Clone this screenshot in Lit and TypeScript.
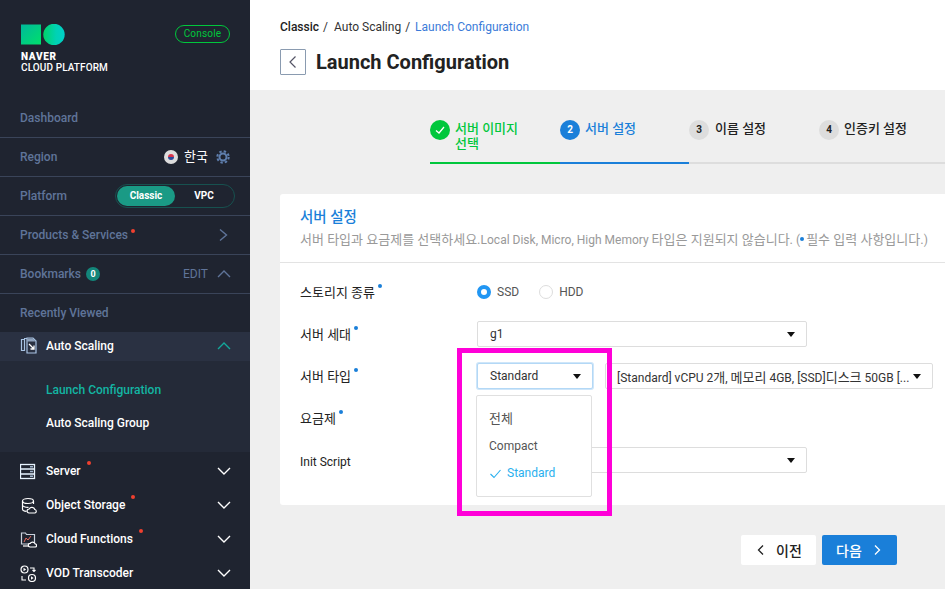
import { LitElement, css, html, svg } from "lit";
import { customElement } from "lit/decorators.js";

const chevron = (d: string) => html`<svg class="chev" width="14" height="14" viewBox="0 0 14 14"><path d=${d} fill="none" stroke="currentColor" stroke-width="1.4"/></svg>`;
const UP = "M2 10 8 4 14 10";
const DOWN = "M2 4 8 10 14 4";
const RIGHT = "M4 1.500 10.500 7 4 12.500";

const icons: Record<string, unknown> = {
  scaling: svg`<path d="M1.5 2.5h3v11h-3zM4 1.5h3v12M7 1h6l3 3v12H7z" fill="none" stroke="#a9c4e4" stroke-width="1.2"/><path d="M7 1.5h6l3 3H7z" fill="#8fa3bd"/><path d="M9 7l5 5M14 8.500V12h-3.500" fill="none" stroke="#fff" stroke-width="1.300"/>`,
  server: svg`<rect x="0.500" y="1.500" width="14" height="14" fill="none" stroke="#e8f4ff" stroke-width="1.300"/><path d="M0.500 6h14M0.500 11h14" stroke="#e8f4ff" stroke-width="1.300"/><path d="M10 3.700h3M10 8.500h3M10 13.300h3" stroke="#9fb4cc" stroke-width="1.500"/>`,
  storage: svg`<ellipse cx="8" cy="4" rx="5.500" ry="2.500" fill="none" stroke="#fff" stroke-width="1.200"/><path d="M2.500 4v8c0 1.300 2 2.200 4 2.400M13.500 4v3M2.500 8c0 1.500 3 2.500 6 2.300" fill="none" stroke="#fff" stroke-width="1.200"/><path d="M9 16a2 2 0 0 1 .2-4 3 3 0 0 1 5.600.5 1.800 1.800 0 0 1 .2 3.500z" fill="#1f2430" stroke="#fff" stroke-width="1.200"/>`,
  functions: svg`<path d="M1.500 2h4l1 1.500h8V13h-13z" fill="none" stroke="#c9d2dd" stroke-width="1.200"/><path d="M4 11l2-4 2 2 3-4" fill="none" stroke="#e36a5f" stroke-width="1"/><path d="M3 15h7" stroke="#fff" stroke-width="1.200"/><path d="M10 16a1.800 1.800 0 0 1 .2-3.600 2.800 2.800 0 0 1 5 .5 1.600 1.600 0 0 1 .3 3.100z" fill="#1f2430" stroke="#fff" stroke-width="1.200"/>`,
  vod: svg`<circle cx="4.500" cy="4.500" r="3.500" fill="none" stroke="#fff" stroke-width="1.200"/><path d="M3.500 2.800v3.400l2.600-1.700z" fill="#fff"/><circle cx="12" cy="13" r="3.500" fill="none" stroke="#fff" stroke-width="1.200"/><path d="M11 11.300v3.400l2.600-1.700z" fill="#fff"/><path d="M10 3h4v3M12.500 5l1.500 1.500L15.500 5M2 11v4h4" fill="none" stroke="#fff" stroke-width="1.100"/>`,
};

@customElement("app-root")
export class AppRoot extends LitElement {
  static styles = css`
    :host {
      display: flex;
      width: 945px;
      height: 589px;
      overflow: hidden;
      font-family: Roboto, "Noto Sans CJK KR", sans-serif;
      font-size: 12px;
      background: #efefef;
      color: #222;
    }
    * { box-sizing: border-box; }
    svg { display: block; flex: none; }
    .chev { overflow: visible; }
    .ko { font-size: 13px; }

    .side { width: 250px; flex: none; background: #1f2430; color: #5f7499; font-weight: 500; }
    .brand { height: 99px; padding: 24px 20px 0 21px; display: flex; justify-content: space-between; }
    .logo-text { margin-top: 6px; color: #fff; font-size: 10px; line-height: 11px; letter-spacing: 0.1px; }
    .logo-text b { display: block; font-weight: 900; letter-spacing: 0.7px; }
    .console { height: 18px; width: 55px; margin-top: 1px; border: 1px solid #00c73c; border-radius: 9px; color: #00c73c; font-size: 10px; font-weight: 400; line-height: 16px; text-align: center; letter-spacing: 0.2px; }

    .row { height: 39px; padding: 0 20px; display: flex; align-items: center; border-bottom: 1px solid #3a4459; }
    .row.plain { border-bottom: 0; height: 38px; }
    .row .push { margin-left: auto; }
    .hint { display: flex; align-items: center; gap: 6px; color: #fff; font-weight: 400; }
    .hint .ko { margin-top: -3px; }
    .hint svg { margin-left: 2px; }
    .flag { width: 14px; height: 14px; border-radius: 50%; background: #ddd; position: relative; overflow: hidden; }
    .flag::after { content: ""; position: absolute; left: 4px; top: 4px; width: 6px; height: 6px; border-radius: 50%; background: linear-gradient(#d8334a 50%, #2a4a9a 50%); }
    .toggle { margin-left: auto; margin-right: -5px; width: 120px; height: 24px; padding: 1px; border: 1px solid #17514f; border-radius: 12px; display: flex; color: #fff; font-size: 10px; font-weight: 700; line-height: 20px; text-align: center; }
    .toggle span { width: 58px; border-radius: 10px; }
    .toggle span.on { background: #1a9a85; }
    .toggle span + span { flex: 1; }
    .red { width: 4px; height: 4px; border-radius: 50%; background: #f0402f; align-self: flex-start; margin-left: 3px; }
    .row .red { margin-top: 13px; }
    .badge { width: 14px; height: 14px; margin-left: 5px; border-radius: 50%; background: #13867a; color: #fff; font-size: 9px; font-weight: 700; line-height: 14px; text-align: center; }
    .edit { margin-left: auto; margin-right: 8px; font-weight: 400; }
    .chev { color: #5f7499; }

    .menu { height: 29px; padding: 0 20px; display: flex; align-items: center; color: #fff; }
    .menu.open { background: #2a3142; padding-bottom: 2px; }
    .menu.open .chev { color: #13a89a; }
    .menu .label { margin-left: 9px; }
    .menu .chev { margin-left: auto; color: #fff; }
    .sub { height: 91px; background: #242a38; padding: 13px 0 0 46px; color: #fff; }
    .sub div { height: 33px; line-height: 33px; }
    .sub .cur { color: #13b5a3; }
    .group { padding-top: 2px; }
    .group .menu { height: 34px; }
    .group .red { margin-top: 7px; margin-left: 6px; }

    .main { flex: 1; min-width: 0; position: relative; }
    .head { height: 90px; background: #fff; padding: 20px 30px 0; }
    .crumb { display: flex; gap: 4px; line-height: 14px; color: #333; }
    .crumb b { font-weight: 500; color: #222; }
    .crumb .cur { color: #3b7bd8; margin-left: 1px; }
    .crumb .mid { margin-left: 2px; }
    .title { margin-top: 15px; display: flex; align-items: center; gap: 10px; font-size: 20px; font-weight: 700; color: #222; }
    .back { width: 26px; height: 26px; border: 1px solid #8a9bb0; border-radius: 1px; display: flex; align-items: center; justify-content: center; color: #556; }

    .steps { display: flex; padding: 30px 0 0 180px; height: 104px; width: 695px; }
    .step { flex: none; width: 130px; height: 44px; padding-right: 40px; display: flex; gap: 5px; border-bottom: 2px solid #ddd; color: #222; font-size: 13px; font-weight: 500; line-height: 15px; }
    .step:nth-child(3) { gap: 6px; }
    .step:last-child { flex: 1; padding-right: 0; }
    .step .num { width: 20px; height: 20px; border-radius: 50%; background: #ddd; flex: none; font-size: 10px; font-weight: 700; line-height: 20px; text-align: center; display: flex; align-items: center; justify-content: center; }
    .step .txt { white-space: nowrap; margin-top: 1px; }
    .step.done { color: #00c73c; border-color: #00c73c; }
    .step.done .num { background: #00c73c; }
    .step.done .txt { white-space: normal; }
    .step.cur { color: #1a7fd9; border-color: #1a7fd9; width: 129px; }
    .step.cur .num { background: #1a7fd9; color: #fff; }

    .card { margin-left: 30px; width: 700px; height: 311px; background: #fff; border-radius: 3px 0 0 3px; }
    .card-head { height: 69px; padding: 14px 20px 0; border-bottom: 1px solid #e3e3e3; }
    .card-head h2 { margin: 0; color: #1a7fd9; font-size: 14.500px; font-weight: 500; line-height: 20px; }
    .card-head p { margin: 3px 0 0; color: #999; font-size: 12px; line-height: 18px; white-space: nowrap; }
    .inline-req { display: inline-block; width: 4px; height: 4px; border-radius: 50%; background: #1a7fd9; margin: 0 2px 3px 0; }
    .form { padding: 8px 20px 0; }
    .line { height: 42px; display: flex; align-items: center; color: #222; }
    .lab { width: 177px; display: flex; font-size: 13px; margin-bottom: 2px; }
    .lab.en { font-size: 12px; margin: 3px 0 0; }
    .req { width: 4px; height: 4px; border-radius: 50%; background: #1a7fd9; margin: 2px 0 0 3px; }
    .radio { display: flex; align-items: center; gap: 6px; margin-right: 20px; color: #555; }
    .dot { width: 14px; height: 14px; border-radius: 50%; border: 1px solid #ddd; }
    .dot.on { border: 4px solid #2196f3; }
    .sel { height: 26px; border: 1px solid #ddd; border-radius: 2px; padding: 0 11px 0 12px; display: flex; align-items: center; justify-content: space-between; color: #333; background: #fff; white-space: nowrap; }
    .sel::after { content: ""; margin-left: auto; border: 4px solid transparent; border-top: 5px solid #111; border-bottom: 0; flex: none; }
    .wide { width: 330px; }
    .typewrap { position: relative; margin-right: 12px; }
    .type { width: 116px; border-color: #b3d8f6; box-shadow: 0 0 0 1px #cfe6f9; }
    .long { width: 328px; padding: 0 11px; }
    .drop { position: absolute; left: -1px; top: 32px; width: 116px; height: 102px; padding: 9px 12px; background: #fff; border: 1px solid #e0e0e0; border-radius: 2px; color: #555; z-index: 2; }
    .drop div { height: 27px; line-height: 27px; display: flex; align-items: center; gap: 5px; }
    .drop div:nth-child(2) { margin-top: 1px; }
    .drop .on { color: #2ab0ee; }
    .mark { position: absolute; left: 207px; top: 348px; width: 155px; height: 168px; border: 5px solid #ff00d8; z-index: 3; pointer-events: none; }

    .actions { padding: 30px 48px 0 0; display: flex; justify-content: flex-end; gap: 6px; }
    .btn { width: 75px; height: 30px; display: flex; align-items: center; justify-content: center; gap: 9px; background: #fff; border-radius: 2px; font-size: 14px; font-weight: 500; }
    .btn.primary { background: #1a7fd9; color: #fff; }
  `;

  private menuRow(icon: string, label: string, dot = false, open = false) {
    return html`<div class="menu ${open ? "open" : ""}">
      <svg width="17" height="17" viewBox="0 0 17 17">${icons[icon]}</svg>
      <span class="label">${label}</span>
      ${dot ? html`<i class="red"></i>` : ""}
      ${chevron(open ? UP : DOWN)}
    </div>`;
  }

  render() {
    return html`
      <aside class="side">
        <div class="brand">
          <div>
            <svg width="44" height="21" viewBox="0 0 44 21">
              <defs>
                <linearGradient id="sq" x1="0" y1="0" x2="1" y2="1"><stop offset="0" stop-color="#00b89c"/><stop offset="1" stop-color="#00e06a"/></linearGradient>
                <linearGradient id="ci" x1="0" y1="0" x2="1" y2="0"><stop offset="0" stop-color="#00d468"/><stop offset="0.6" stop-color="#00d2b4"/><stop offset="1" stop-color="#00cfc8"/></linearGradient>
              </defs>
              <rect x="0" y="0.500" width="20" height="20" fill="url(#sq)"/>
              <circle cx="33" cy="10.500" r="10.700" fill="url(#ci)"/>
            </svg>
            <div class="logo-text"><b>NAVER</b>CLOUD PLATFORM</div>
          </div>
          <div class="console">Console</div>
        </div>
        <div class="row">Dashboard</div>
        <div class="row">Region
          <div class="hint push"><i class="flag"></i><span class="ko">한국</span>
            <svg width="14" height="14" viewBox="0 0 14 14"><circle cx="7" cy="7" r="3.500" fill="none" stroke="#5f7fae" stroke-width="2"/><circle cx="7" cy="7" r="5.700" fill="none" stroke="#5f7fae" stroke-width="2" stroke-dasharray="2.400 2.080"/></svg>
          </div>
        </div>
        <div class="row">Platform
          <div class="toggle"><span class="on">Classic</span><span>VPC</span></div>
        </div>
        <div class="row">Products &amp; Services<i class="red"></i><span class="push">${chevron(RIGHT)}</span></div>
        <div class="row">Bookmarks<span class="badge">0</span><span class="edit">EDIT</span>${chevron(UP)}</div>
        <div class="row plain">Recently Viewed</div>
        ${this.menuRow("scaling", "Auto Scaling", false, true)}
        <div class="sub"><div class="cur">Launch Configuration</div><div>Auto Scaling Group</div></div>
        <div class="group">
          ${this.menuRow("server", "Server", true)}
          ${this.menuRow("storage", "Object Storage", true)}
          ${this.menuRow("functions", "Cloud Functions", true)}
          ${this.menuRow("vod", "VOD Transcoder")}
        </div>
      </aside>

      <main class="main">
        <header class="head">
          <div class="crumb"><b>Classic</b><span>/</span><span class="mid">Auto Scaling</span><span>/</span><span class="cur">Launch Configuration</span></div>
          <div class="title">
            <div class="back"><svg width="14" height="14" viewBox="0 0 14 14"><path d="M9.500 1.500 4 7l5.500 5.500" fill="none" stroke="currentColor" stroke-width="1.200"/></svg></div>
            Launch Configuration
          </div>
        </header>

        <div class="steps">
          <div class="step done"><span class="num"><svg width="12" height="12" viewBox="0 0 12 12"><path d="M2 6.500 5 9l5-6" fill="none" stroke="#fff" stroke-width="1.300"/></svg></span><span class="txt">서버 이미지 선택</span></div>
          <div class="step cur"><span class="num">2</span><span class="txt">서버 설정</span></div>
          <div class="step"><span class="num">3</span><span class="txt">이름 설정</span></div>
          <div class="step"><span class="num">4</span><span class="txt">인증키 설정</span></div>
        </div>

        <section class="card">
          <div class="card-head">
            <h2>서버 설정</h2>
            <p><span class="ko">서버 타입과 요금제를 선택하세요.</span>Local Disk, Micro, High Memory <span class="ko">타입은 지원되지 않습니다.</span> (<i class="inline-req"></i><span class="ko">필수 입력 사항입니다.</span>)</p>
          </div>
          <div class="form">
            <div class="line"><span class="lab">스토리지 종류<i class="req"></i></span>
              <label class="radio"><i class="dot on"></i>SSD</label>
              <label class="radio"><i class="dot"></i>HDD</label>
            </div>
            <div class="line"><span class="lab">서버 세대<i class="req"></i></span><div class="sel wide">g1</div></div>
            <div class="line"><span class="lab">서버 타입<i class="req"></i></span>
              <div class="typewrap">
                <div class="sel type">Standard</div>
                <div class="drop">
                  <div class="ko">전체</div>
                  <div>Compact</div>
                  <div class="on"><svg width="13" height="13" viewBox="0 0 13 13"><path d="M1.500 7 5 10.500 11.500 3" fill="none" stroke="#2ab0ee" stroke-width="1.100"/></svg>Standard</div>
                </div>
              </div>
              <div class="sel long"><span>[Standard] vCPU 2<span class="ko">개</span>, <span class="ko">메모리</span> 4GB, [SSD]<span class="ko">디스크</span> 50GB [...</span></div>
            </div>
            <div class="line"><span class="lab">요금제<i class="req"></i></span></div>
            <div class="line"><span class="lab en">Init Script</span><div class="sel wide"></div></div>
          </div>
        </section>

        <div class="actions">
          <div class="btn"><svg width="12" height="12" viewBox="0 0 12 12"><path d="M8 1.500 3.500 6 8 10.500" fill="none" stroke="currentColor" stroke-width="1.300"/></svg>이전</div>
          <div class="btn primary">다음<svg width="12" height="12" viewBox="0 0 12 12"><path d="M4 1.500 8.500 6 4 10.500" fill="none" stroke="currentColor" stroke-width="1.300"/></svg></div>
        </div>

        <div class="mark"></div>
      </main>
    `;
  }
}
